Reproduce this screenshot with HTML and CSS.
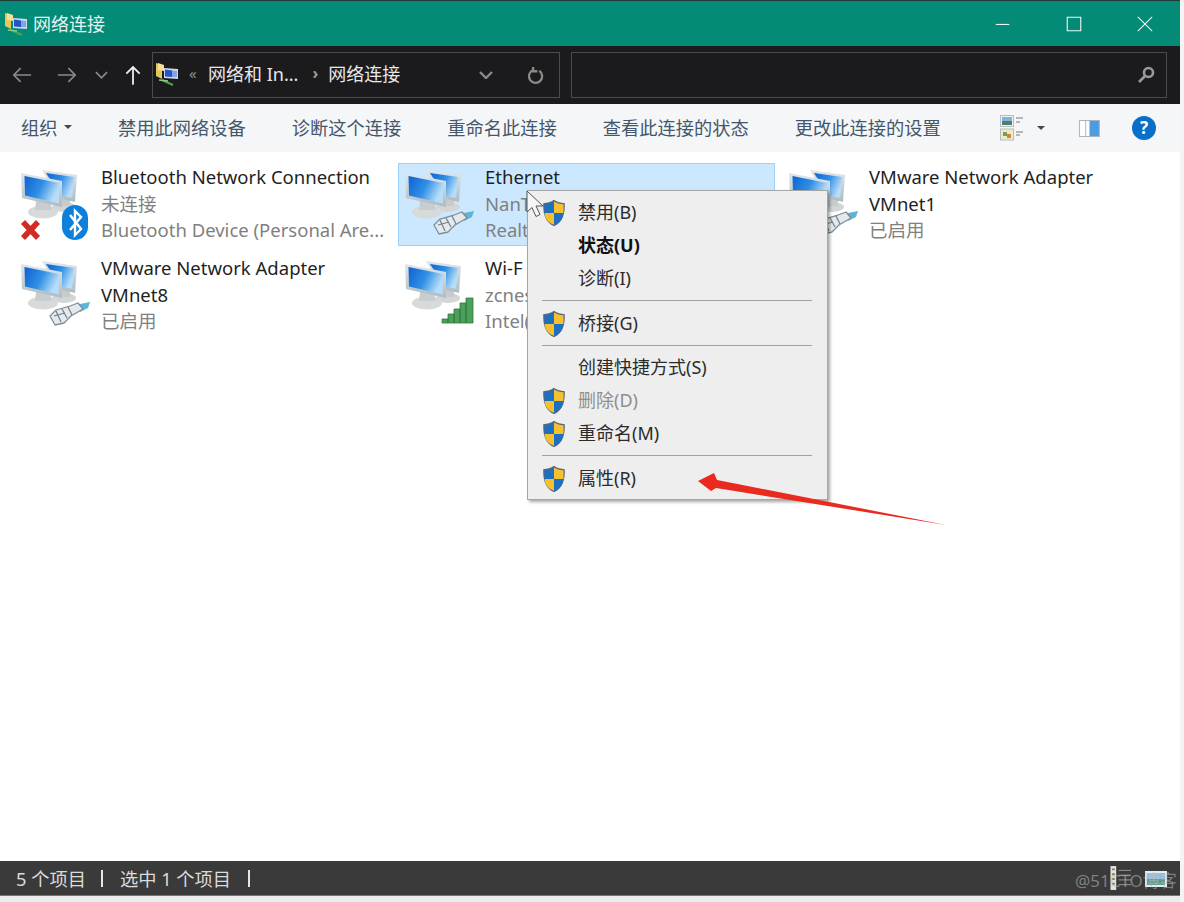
FILE: index.html
```html
<!DOCTYPE html>
<html lang="zh-CN">
<head>
<meta charset="utf-8">
<title>网络连接</title>
<link rel="stylesheet" href="styles.css">
</head>
<body>
<svg class="sprite" xmlns="http://www.w3.org/2000/svg" aria-hidden="true">
  <defs>
    <linearGradient id="scr" x1="0" y1="0" x2="1" y2="0.4">
      <stop offset="0" stop-color="#0f63cf"/><stop offset="0.55" stop-color="#2f8fe6"/><stop offset="1" stop-color="#b6dcf7"/>
    </linearGradient>
    <linearGradient id="bez" x1="0" y1="0" x2="0" y2="1">
      <stop offset="0" stop-color="#dfe7ec"/><stop offset="1" stop-color="#aebbc3"/>
    </linearGradient>
    <symbol id="pcs" viewBox="0 0 72 78">
      <ellipse cx="46" cy="42" rx="12" ry="5" fill="#d4d6d6"/>
      <path d="M38 34h14v7H38z" fill="#c6ccce"/>
      <path d="M24 5 59 10 57 37 40 33z" fill="url(#bez)"/>
      <path d="M28 8 56 12 54 33 42 30z" fill="url(#scr)"/>
      <ellipse cx="25" cy="47" rx="15" ry="6.500" fill="#d8d9d9"/>
      <path d="M18 36h14l2 9H17z" fill="#c8cdcf"/>
      <path d="M3 8 44 16 44 42 4 33z" fill="url(#bez)"/>
      <path d="M6.500 11 41 18 41 38.500 7 30.500z" fill="url(#scr)"/>
    </symbol>
    <symbol id="plug" viewBox="0 0 72 78">
      <path d="M57 49 72 46 70 52 62 56z" fill="#5fb4d6"/>
      <path d="M32 60 38 54 52 50 60 47 65 53 53 60 46 67 37 69z" fill="#e3e9ec" stroke="#7f8d94" stroke-width="1.300" stroke-linejoin="round"/>
      <path d="M38 55 43 66M44 53 49 62M50 51 54 59M36 60 47 57" stroke="#71808a" stroke-width="1.200" fill="none"/>
    </symbol>
    <symbol id="shield" viewBox="0 0 24 28">
      <path d="M12 .8C9 3 5 4 1.200 4.200 1 14 2.500 23 12 27.200 21.500 23 23 14 22.800 4.200 19 4 15 3 12 .8z" fill="#5a6878"/>
      <path d="M12 2.500V14H2.600C2.400 11 2.400 8 2.500 5.300 6 5 9.300 4.200 12 2.500z" fill="#1d6fc2"/>
      <path d="M12 2.500V14h9.400c.2-3 .2-6 .1-8.700C18 5 14.700 4.200 12 2.500z" fill="#f6c02f"/>
      <path d="M12 14H2.600c.5 5 2.700 9.500 9.400 11.700z" fill="#f6c02f"/>
      <path d="M12 14h9.400c-.5 5-2.700 9.500-9.400 11.700z" fill="#1d6fc2"/>
    </symbol>
    <symbol id="folder" viewBox="0 0 24 24">
      <path d="M1 1 7 3V17L1 14z" fill="#e7c65a"/>
      <path d="M3 1 9 3V9L3 8z" fill="#f3e09a"/>
      <path d="M9 6 23 7V17L9 16z" fill="#cfd8e6"/>
      <path d="M10 7.500 17 8.500V15L10 14.500z" fill="#2552c4"/>
      <path d="M17 8.500 22 9V15L17 15z" fill="#7fa6e0"/>
      <path d="M7 18 18 23" stroke="#4fa04f" stroke-width="2.200" fill="none"/>
      <path d="M4 18 13 19" stroke="#8cc98c" stroke-width="1.600" fill="none"/>
    </symbol>
  </defs>
</svg>

<div class="window">
  <header class="titlebar">
    <svg class="title-icon"><use href="#folder"/></svg>
    <span class="title-text">网络连接</span>
    <div class="win-controls">
      <svg class="win-btn" viewBox="0 0 20 20"><path d="M2 10.500H17" /></svg>
      <svg class="win-btn" viewBox="0 0 20 20"><path d="M2.500 2.500H17.500V17.500H2.500z"/></svg>
      <svg class="win-btn" viewBox="0 0 20 20"><path d="M2 2 18 18M18 2 2 18"/></svg>
    </div>
  </header>

  <nav class="addressbar">
    <svg class="nav-icon nav-back" viewBox="0 0 22 18"><path d="M21 9H2M9.500 1.500 2 9l7.500 7.500"/></svg>
    <svg class="nav-icon nav-forward" viewBox="0 0 22 18"><path d="M1 9H20M12.500 1.500 20 9l-7.500 7.500"/></svg>
    <svg class="nav-icon nav-chev" viewBox="0 0 14 8"><path d="M1 1l6 6 6-6"/></svg>
    <svg class="nav-icon nav-up" viewBox="0 0 18 22"><path d="M9 22V2M1.500 9.500 9 2l7.500 7.500"/></svg>
    <div class="addr-box">
      <svg class="addr-folder"><use href="#folder"/></svg>
      <span class="addr-more">«</span>
      <span class="addr-crumb">网络和 In...</span>
      <span class="addr-sep">›</span>
      <span class="addr-crumb addr-last">网络连接</span>
      <svg class="nav-icon addr-drop" viewBox="0 0 14 8"><path d="M1 1l6 6 6-6"/></svg>
      <svg class="nav-icon addr-refresh" viewBox="0 0 18 20"><path d="M6 4.500A7 7 0 1 0 13 5M6.500 1v4.500H11"/></svg>
    </div>
    <div class="search-box">
      <svg class="search-icon" viewBox="0 0 18 18"><circle cx="11.500" cy="6.500" r="4.500"/><path d="M8 10 2 16"/></svg>
    </div>
  </nav>

  <div class="toolbar">
    <span class="tool">组织<i class="caret"></i></span>
    <span class="tool">禁用此网络设备</span>
    <span class="tool">诊断这个连接</span>
    <span class="tool">重命名此连接</span>
    <span class="tool">查看此连接的状态</span>
    <span class="tool">更改此连接的设置</span>
    <div class="tool-right">
      <svg class="view-icon" viewBox="0 0 24 26">
        <rect x=".5" y=".5" width="13" height="11" fill="#eef2f4" stroke="#b7bec3"/>
        <path d="M2 2h10v4H2z" fill="#7fb4de"/><path d="M2 6h10v4H2z" fill="#4f7f63"/>
        <rect x=".5" y="14" width="13" height="11" fill="#f2e9c9" stroke="#b7bec3"/>
        <path d="M3 17h4v4H3z" fill="#6fa45a"/><path d="M7 19h4v4H7z" fill="#c9883a"/>
        <path d="M16 3h7M16 7h4M16 17h7M16 20h4" stroke="#9aa3a8" stroke-width="1.400"/>
      </svg>
      <i class="caret caret-view"></i>
      <svg class="pane-icon" viewBox="0 0 22 18">
        <rect x=".5" y=".5" width="21" height="17" fill="#fff" stroke="#a9b1b6"/>
        <path d="M7 1v16" stroke="#a9b1b6"/><rect x="11" y="1" width="10" height="16" fill="#4d9be0"/>
      </svg>
      <span class="help">?</span>
    </div>
  </div>

  <main class="content">
    <div class="grid">
      <div class="item">
        <svg class="item-icon">
          <use href="#pcs"/>
          <path class="x-mark" d="M5 57 20 73M20 57 5 73"/>
          <rect x="44" y="40" width="26" height="35" rx="13" fill="#0f7fdc"/>
          <path class="bt-mark" d="M52 50 63 64 57 70V46L63 52 52 65"/>
        </svg>
        <div class="item-text">
          <div class="name">Bluetooth Network Connection</div>
          <div class="sub">未连接</div>
          <div class="sub">Bluetooth Device (Personal Are...</div>
        </div>
      </div>
      <div class="item selected">
        <svg class="item-icon"><use href="#pcs"/><use href="#plug"/></svg>
        <div class="item-text">
          <div class="name">Ethernet</div>
          <div class="sub">NanT</div>
          <div class="sub">Realt</div>
        </div>
      </div>
      <div class="item">
        <svg class="item-icon"><use href="#pcs"/><use href="#plug"/></svg>
        <div class="item-text">
          <div class="name">VMware Network Adapter VMnet1</div>
          <div class="sub">已启用</div>
        </div>
      </div>
      <div class="item">
        <svg class="item-icon"><use href="#pcs"/><use href="#plug"/></svg>
        <div class="item-text">
          <div class="name">VMware Network Adapter VMnet8</div>
          <div class="sub">已启用</div>
        </div>
      </div>
      <div class="item">
        <svg class="item-icon">
          <use href="#pcs"/>
          <path class="signal" d="M40 67V63H46V67zM46 67V58H52V67zM52 67V53H58V67zM58 67V47H64V67zM64 67V42H71V67z"/>
        </svg>
        <div class="item-text">
          <div class="name">Wi-F</div>
          <div class="sub">zcnes</div>
          <div class="sub">Intel(</div>
        </div>
      </div>
    </div>
  </main>

  <footer class="statusbar">
    <span class="status-text">5 个项目</span>
    <i class="status-div"></i>
    <span class="status-text">选中 1 个项目</span>
    <i class="status-div status-div-last"></i>
    <svg class="status-details" viewBox="0 0 22 26">
      <rect x=".5" y=".5" width="6" height="25" fill="#e3e3e3"/>
      <path d="M2 4h3M2 9h3M2 14h3M2 19h3" stroke="#8a7a5a" stroke-width="2"/>
      <path d="M9 5h13M9 10h13M9 15h13M9 20h13" stroke="#9a9a9a"/>
    </svg>
    <svg class="status-large" viewBox="0 0 22 16">
      <rect width="22" height="16" fill="#e8eef2"/><rect x="2" y="2" width="18" height="6" fill="#8fc2e4"/><rect x="2" y="8" width="18" height="6" fill="#5f9a92"/>
    </svg>
    <span class="watermark">@51CTO博客</span>
  </footer>

  <div class="menu">
    <div class="menu-item"><svg class="shield"><use href="#shield"/></svg>禁用(B)</div>
    <div class="menu-item strong">状态(U)</div>
    <div class="menu-item">诊断(I)</div>
    <div class="menu-sep"></div>
    <div class="menu-item"><svg class="shield"><use href="#shield"/></svg>桥接(G)</div>
    <div class="menu-sep"></div>
    <div class="menu-item">创建快捷方式(S)</div>
    <div class="menu-item disabled"><svg class="shield"><use href="#shield"/></svg>删除(D)</div>
    <div class="menu-item"><svg class="shield"><use href="#shield"/></svg>重命名(M)</div>
    <div class="menu-sep"></div>
    <div class="menu-item"><svg class="shield"><use href="#shield"/></svg>属性(R)</div>
  </div>

  <svg class="cursor" viewBox="0 0 20 28"><path d="M1 1V22L6 17.500 10 26.500 14 24.500 10 16 17 16z"/></svg>
  <svg class="red-arrow" viewBox="0 0 260 60"><path d="M1 11 17 3 20 10 249 55 19 18 14 21z"/></svg>
</div>
</body>
</html>
```
FILE: styles.css
```css
* { box-sizing: border-box; }
html, body { margin: 0; height: 100%; }
body {
  width: 1184px;
  height: 902px;
  overflow: hidden;
  background: #f4f4f4;
  font-family: "Noto Sans", "Noto Sans CJK SC", sans-serif;
  font-size: 18px;
}
.sprite { display: block; width: 0; height: 0; }

.window {
  position: relative;
  width: 1180px;
  height: 902px;
  display: flex;
  flex-direction: column;
}

.titlebar {
  height: 46px;
  flex: none;
  display: flex;
  align-items: center;
  background: #038b78;
  border-top: 1px solid #1d3a36;
  padding-left: 4px;
  color: #e6f4f1;
}
.title-icon { width: 24px; height: 24px; margin-right: 5px; }
.title-text { line-height: 46px; }
.win-controls { margin-left: auto; display: flex; gap: 53px; padding-right: 26px; }
.win-btn { width: 18px; height: 18px; fill: none; stroke: #eef8f6; stroke-width: 1.200; }

.addressbar {
  height: 58px;
  flex: none;
  display: flex;
  align-items: center;
  background: #1b1b1d;
  padding: 0 13px 0 12px;
}
.nav-icon { fill: none; stroke: #8a8a8a; stroke-width: 1.800; flex: none; }
.nav-back { width: 20px; height: 18px; }
.nav-forward { width: 20px; height: 18px; margin-left: 25px; }
.nav-chev { width: 13px; height: 8px; margin-left: 18px; }
.nav-up { width: 16px; height: 20px; margin-left: 17px; stroke: #f0f0f0; stroke-width: 2; }
.addr-box {
  width: 408px;
  height: 46px;
  margin-left: 11px;
  border: 1px solid #4b4b4b;
  display: flex;
  align-items: center;
  padding-left: 2px;
  color: #e8e8e8;
}
.addr-folder { width: 24px; height: 24px; flex: none; margin-bottom: 3px; }
.addr-more { color: #8f8f8f; margin-left: 10px; font-size: 15px; width: 9px; padding-bottom: 4px; }
.addr-crumb { margin-left: 10px; white-space: nowrap; padding-bottom: 4px; }
.addr-last { margin-left: 0; }
.addr-sep { color: #9a9a9a; margin-left: 14px; margin-right: 10px; font-weight: 700; font-size: 16px; padding-bottom: 4px; }
.addr-drop { width: 14px; height: 8px; margin-left: 79px; stroke-width: 2.400; }
.addr-refresh { width: 17px; height: 19px; margin-left: 34px; stroke-width: 2.400; }
.search-box {
  flex: 1;
  height: 46px;
  margin-left: 11px;
  border: 1px solid #4b4b4b;
  display: flex;
  align-items: center;
  justify-content: flex-end;
  padding-right: 11px;
}
.search-icon { width: 18px; height: 18px; fill: none; stroke: #9a9a9a; stroke-width: 2.600; }

.toolbar {
  height: 48px;
  flex: none;
  display: flex;
  align-items: center;
  gap: 46px;
  padding-left: 21px;
  background: #f5f6f8;
  color: #44566c;
  font-size: 18.250px;
}
.tool { white-space: nowrap; display: flex; align-items: center; padding-bottom: 2px; }
.caret {
  display: block;
  width: 0;
  height: 0;
  margin-left: 6.500px;
  border-left: 4px solid transparent;
  border-right: 4px solid transparent;
  border-top: 4px solid #3c4a5a;
}
.tool-right { margin-left: auto; display: flex; align-items: center; padding-right: 24px; }
.view-icon { width: 24px; height: 26px; }
.caret-view { margin-left: 13px; }
.pane-icon { width: 23px; height: 17px; margin-left: 33px; }
.help {
  width: 24px;
  height: 24px;
  margin-left: 31px;
  border-radius: 50%;
  background: #0a6fc9;
  color: #fff;
  font-weight: 700;
  font-size: 17px;
  line-height: 24px;
  text-align: center;
}

.content { flex: 1; background: #fff; padding: 11px 0 0 14px; min-height: 0; }
.grid { display: grid; grid-template-columns: repeat(3, 377px); grid-auto-rows: 83px; gap: 8px 7px; }
.item {
  display: flex;
  align-items: center;
  border: 1px solid transparent;
  padding-left: 3px;
  min-width: 0;
}
.item.selected { background: #cce8ff; border-color: #99d1ff; }
.item-icon { width: 72px; height: 78px; flex: none; align-self: flex-start; margin-top: 1px; }
.item-text { width: 286px; margin: -1px 0 0 11px; line-height: 26.500px; font-size: 18.500px; }
.name { color: #1f1f1f; }
.sub { color: #808080; white-space: nowrap; }
.x-mark { fill: none; stroke: #d32a22; stroke-width: 5.500; }
.bt-mark { fill: none; stroke: #fff; stroke-width: 2.400; }
.signal { fill: #4da05a; stroke: #2f7a3d; stroke-width: .8; }

.statusbar {
  height: 41px;
  flex: none;
  display: flex;
  align-items: center;
  background: #3a3a3a;
  color: #dcdcdc;
  padding-left: 16px;
  border-bottom: 6px solid #e9eeed;
  box-shadow: inset 0 -1px 0 #3f8f82;
  position: relative;
  font-size: 18.250px;
}
.status-text { padding-bottom: 2px; }
.status-div { width: 2px; height: 17px; background: #e6e6e6; margin: 0 17px 0 15px; }
.status-div-last { margin-left: 17px; }
.status-details { width: 21px; height: 26px; position: absolute; left: 1110px; top: 4px; }
.status-large { width: 22px; height: 16px; position: absolute; left: 1145px; top: 10px; }
.watermark { position: absolute; left: 1075px; top: 6px; color: rgba(190, 190, 190, 0.55); font-size: 17px; white-space: nowrap; }

.menu {
  position: absolute;
  left: 527px;
  top: 190px;
  width: 301px;
  height: 310px;
  padding-top: 5px;
  background: #eeeeef;
  border: 1px solid #a6a6a6;
  box-shadow: 2px 2px 3px rgba(0, 0, 0, 0.35);
  color: #2b2b2b;
}
.menu-item {
  position: relative;
  height: 33px;
  line-height: 33px;
  padding-left: 50px;
  white-space: nowrap;
}
.menu-item.strong { font-weight: 700; color: #111; }
.menu-item.disabled { color: #8e8e8e; }
.shield { position: absolute; left: 14px; top: 3px; width: 24px; height: 28px; }
.menu-sep { height: 11.500px; padding-top: 5px; margin: 0 15px 0 14px; }
.menu-sep::before { content: ""; display: block; height: 1px; background: #a2a2a2; }

.cursor {
  position: absolute;
  left: 526px;
  top: 190px;
  width: 20px;
  height: 28px;
  fill: #f6f6f6;
  stroke: #555;
  stroke-width: 1;
}
.red-arrow {
  position: absolute;
  left: 697px;
  top: 470px;
  width: 260px;
  height: 60px;
  fill: #ea2a1e;
}
```
